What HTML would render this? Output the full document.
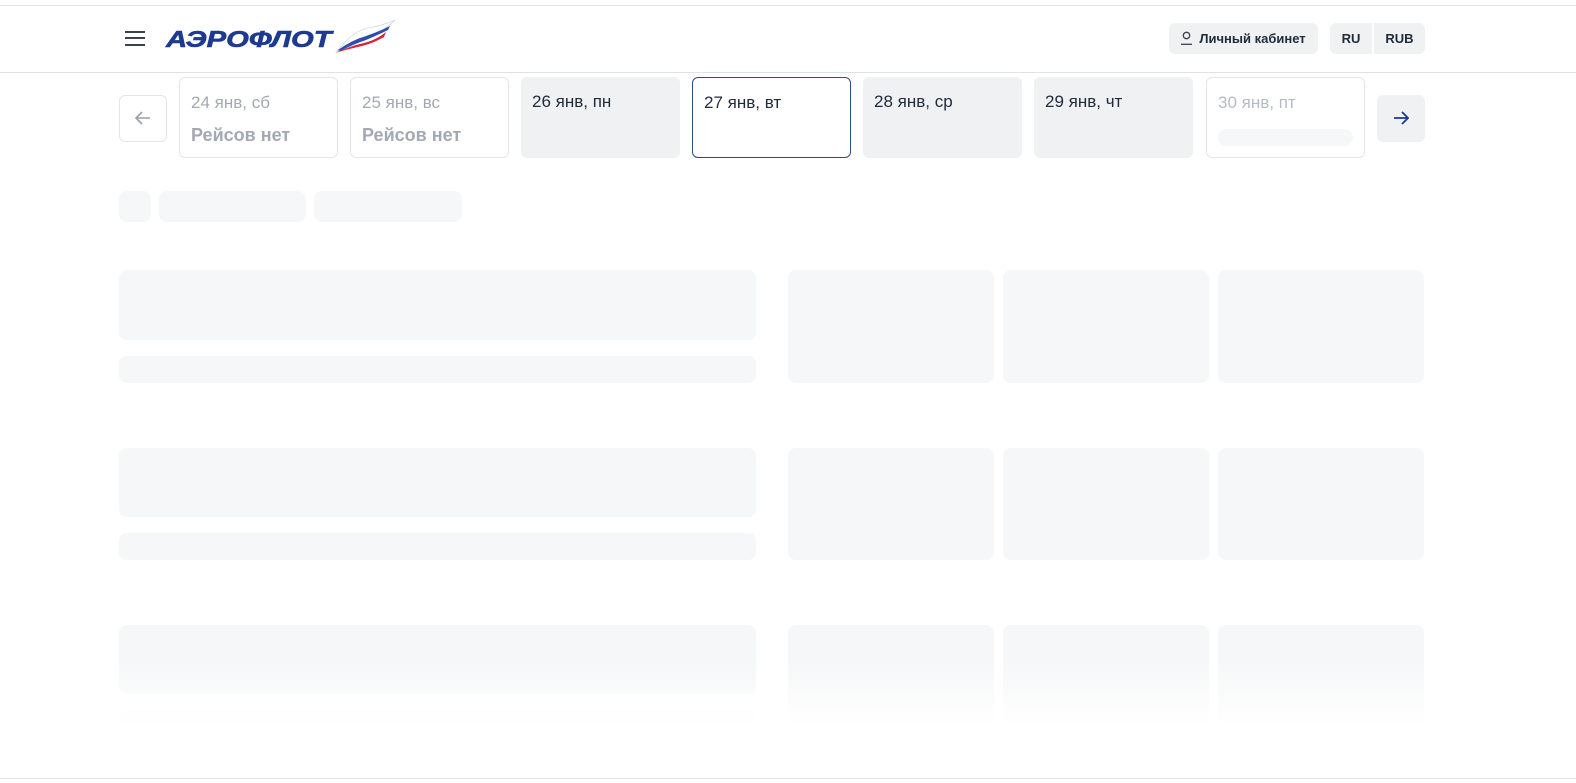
<!DOCTYPE html>
<html><head><meta charset="utf-8"><style>
*{margin:0;padding:0;box-sizing:border-box}
body{width:1576px;height:783px;background:#fff;font-family:"Liberation Sans",sans-serif;position:relative;overflow:hidden}
.a{position:absolute}
.sk{position:absolute;background:#f6f7f8;border-radius:8px}
.card{position:absolute;top:77px;width:159px;height:81px;border-radius:6px;font-size:17px;padding:16px 11px;line-height:1}
.card .l2{margin-top:15px;font-size:18px;font-weight:bold}
.btn{position:absolute;top:23px;height:31px;background:#eff1f3;border-radius:6px;font-size:13px;font-weight:bold;color:#1f2a3a;line-height:31px;text-align:center}
</style></head><body>
<div class="a" style="left:0;top:5px;width:1576px;height:1px;background:#e2e4e7"></div>
<div class="a" style="left:0;top:72px;width:1576px;height:1px;background:#dfe1e4"></div>
<div class="a" style="left:0;top:778px;width:1576px;height:1px;background:#e2e4e7"></div>
<div class="a" style="left:125px;top:31px;width:20px;height:2px;background:#3a4250"></div>
<div class="a" style="left:125px;top:37px;width:20px;height:2px;background:#3a4250"></div>
<div class="a" style="left:125px;top:44px;width:20px;height:2px;background:#3a4250"></div>
<div class="a" style="left:166px;top:26px;font-size:23px;font-weight:bold;font-style:italic;color:#1d3a8f;transform:scaleX(1.27);transform-origin:left;-webkit-text-stroke:0.6px #1d3a8f">АЭРОФЛОТ</div>
<svg class="a" style="left:332px;top:18px" width="66" height="36" viewBox="0 0 66 36">
<path d="M4 34 Q20 24 34 20 Q48 16 63 2 Q50 8 36 10 Q20 14 10 28Z" fill="#fff" stroke="#c8ccd6" stroke-width=".6"/>
<path d="M6 32 Q20 22 34 18 Q46 14 58 8 L56 12 Q44 18 34 22 Q22 26 8 33Z" fill="#2a4fb0"/>
<path d="M3 35 Q18 28 32 25 Q44 22 54 14 L52 19 Q42 25 30 28 Q16 31 3 35Z" fill="#d4243a"/>
</svg>
<div class="btn" style="left:1169px;width:149px;padding-left:18px">Личный кабинет</div>
<svg class="a" style="left:1180px;top:31px" width="13" height="14" viewBox="0 0 13 14"><circle cx="6.5" cy="4.5" r="3.2" fill="none" stroke="#3a4250" stroke-width="1.3"/><path d="M1 13.3h11" stroke="#3a4250" stroke-width="1.3"/></svg>
<div class="btn" style="left:1330px;width:42px;border-radius:6px 0 0 6px">RU</div>
<div class="btn" style="left:1374px;width:51px;border-radius:0 6px 6px 0">RUB</div>
<div class="a" style="left:119px;top:95px;width:48px;height:47px;border:1px solid #e3e5e8;border-radius:6px"></div>
<svg class="a" style="left:134px;top:109px" width="18" height="18" viewBox="0 0 18 18"><path d="M16 9H2M8 3L2 9l6 6" fill="none" stroke="#9aa1ab" stroke-width="1.6"/></svg>
<div class="a" style="left:1377px;top:95px;width:48px;height:47px;background:#eff1f3;border-radius:6px"></div>
<svg class="a" style="left:1392px;top:109px" width="18" height="18" viewBox="0 0 18 18"><path d="M2 9h14M10 3l6 6-6 6" fill="none" stroke="#1d3a8f" stroke-width="1.8"/></svg>
<div class="card" style="left:179px;border:1px solid #e3e5e8;color:#a3a9b2">24 янв, сб<div class="l2">Рейсов нет</div></div>
<div class="card" style="left:350px;border:1px solid #e3e5e8;color:#a3a9b2">25 янв, вс<div class="l2">Рейсов нет</div></div>
<div class="card" style="left:521px;background:#eff1f3;color:#1f2a3a">26 янв, пн</div>
<div class="card" style="left:692px;border:1px solid #2f4a85;color:#1f2a3a">27 янв, вт</div>
<div class="card" style="left:863px;background:#eff1f3;color:#1f2a3a">28 янв, ср</div>
<div class="card" style="left:1034px;background:#eff1f3;color:#1f2a3a">29 янв, чт</div>
<div class="card" style="left:1206px;border:1px solid #e3e5e8;color:#b7bcc4">30 янв, пт</div>
<div class="sk" style="left:1218px;top:129px;width:135px;height:17px;border-radius:9px"></div>
<div class="sk" style="left:119px;top:191px;width:32px;height:31px"></div>
<div class="sk" style="left:159px;top:191px;width:147px;height:31px"></div>
<div class="sk" style="left:314px;top:191px;width:148px;height:31px"></div>
<div class="sk" style="left:119px;top:270px;width:637px;height:70px"></div>
<div class="sk" style="left:119px;top:356px;width:637px;height:27px"></div>
<div class="sk" style="left:788px;top:270px;width:206px;height:113px"></div>
<div class="sk" style="left:1003px;top:270px;width:206px;height:113px"></div>
<div class="sk" style="left:1218px;top:270px;width:206px;height:113px"></div>
<div class="sk" style="left:119px;top:448px;width:637px;height:69px"></div>
<div class="sk" style="left:119px;top:533px;width:637px;height:27px"></div>
<div class="sk" style="left:788px;top:448px;width:206px;height:112px"></div>
<div class="sk" style="left:1003px;top:448px;width:206px;height:112px"></div>
<div class="sk" style="left:1218px;top:448px;width:206px;height:112px"></div>
<div class="sk" style="left:119px;top:625px;width:637px;height:69px"></div>
<div class="sk" style="left:119px;top:710px;width:637px;height:27px"></div>
<div class="sk" style="left:788px;top:625px;width:206px;height:112px"></div>
<div class="sk" style="left:1003px;top:625px;width:206px;height:112px"></div>
<div class="sk" style="left:1218px;top:625px;width:206px;height:112px"></div>
<div class="a" style="left:0;top:660px;width:1576px;height:118px;background:linear-gradient(rgba(255,255,255,0),#fff 55%)"></div>
</body></html>
